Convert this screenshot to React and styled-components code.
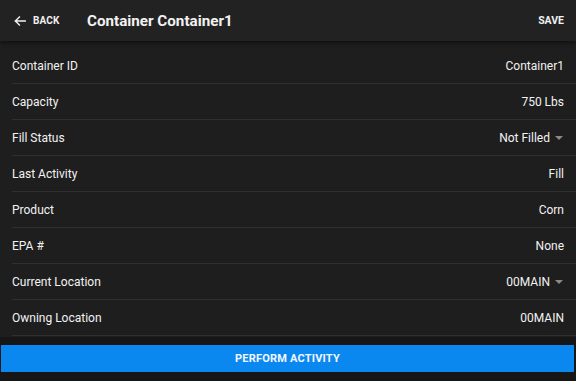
import React from "react";
import styled, { createGlobalStyle } from "styled-components";

const GlobalStyle = createGlobalStyle`
  html, body {
    margin: 0;
    padding: 0;
    background: #161616;
  }
  * { box-sizing: border-box; }
`;

const Screen = styled.div`
  width: 576px;
  height: 381px;
  display: flex;
  flex-direction: column;
  background: #161616;
  font-family: Roboto, "Liberation Sans", sans-serif;
  color: #f2f2f2;
  overflow: hidden;
`;

const Header = styled.div`
  height: 41px;
  flex-shrink: 0;
  display: flex;
  align-items: center;
  padding: 0 12px 0 13px;
  background: #222222;
  box-shadow: 0 2px 4px rgba(0, 0, 0, 0.45);
  position: relative;
  z-index: 1;
`;

const BackButton = styled.div`
  display: flex;
  align-items: center;
  gap: 6px;
  font-size: 10px;
  font-weight: 700;
  letter-spacing: 0.15px;
  color: #f0f0f0;
  width: 74px;
`;

const Title = styled.div`
  flex: 1;
  font-size: 15.2px;
  font-weight: 700;
  color: #f2f2f2;
`;

const Save = styled.div`
  font-size: 10.5px;
  font-weight: 700;
  color: #f0f0f0;
`;

const List = styled.div`
  flex: 1;
  background: #1e1e1e;
  padding: 7px 0 0 12px;
`;

const Row = styled.div`
  height: 36px;
  display: flex;
  align-items: center;
  justify-content: space-between;
  padding-right: 12px;
  border-bottom: 1px solid #303030;
  font-size: 12px;
`;

const Value = styled.div`
  display: flex;
  align-items: center;
  gap: 5px;
`;

const Caret = styled.span`
  width: 0;
  height: 0;
  border-left: 4px solid transparent;
  border-right: 4px solid transparent;
  border-top: 4px solid #8a8a8a;
  margin-right: 1px;
`;

const Footer = styled.div`
  height: 44px;
  flex-shrink: 0;
  padding: 8px 2px 9px 1px;
  background: #161616;
`;

const PrimaryButton = styled.div`
  height: 100%;
  display: flex;
  align-items: center;
  justify-content: center;
  background: #0a88f0;
  color: #f4f8ff;
  font-size: 11px;
  font-weight: 700;
  letter-spacing: 0.2px;
`;

const rows = [
  { label: "Container ID", value: "Container1" },
  { label: "Capacity", value: "750 Lbs" },
  { label: "Fill Status", value: "Not Filled", select: true },
  { label: "Last Activity", value: "Fill" },
  { label: "Product", value: "Corn" },
  { label: "EPA #", value: "None" },
  { label: "Current Location", value: "00MAIN", select: true },
  { label: "Owning Location", value: "00MAIN" },
];

export default function App() {
  return (
    <Screen>
      <GlobalStyle />
      <Header>
        <BackButton>
          <svg width="14" height="14" viewBox="0 0 24 24" fill="none" stroke="#f0f0f0" strokeWidth="2.4" strokeLinecap="square">
            <path d="M21 12H4M11 5l-7 7 7 7" />
          </svg>
          BACK
        </BackButton>
        <Title>Container Container1</Title>
        <Save>SAVE</Save>
      </Header>
      <List>
        {rows.map((r) => (
          <Row key={r.label}>
            <span>{r.label}</span>
            <Value>
              {r.value}
              {r.select && <Caret />}
            </Value>
          </Row>
        ))}
      </List>
      <Footer>
        <PrimaryButton>PERFORM ACTIVITY</PrimaryButton>
      </Footer>
    </Screen>
  );
}
